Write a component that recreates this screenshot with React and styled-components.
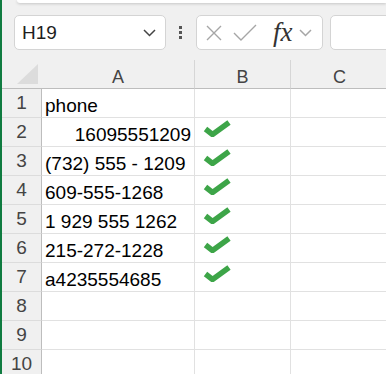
import { Fragment } from "react";
import styled, { createGlobalStyle } from "styled-components";

const GlobalStyle = createGlobalStyle`
  body {
    margin: 0;
    background: #f0f0f0;
    font-family: "Liberation Sans", Arial, sans-serif;
  }
`;

const Page = styled.div`
  display: flex;
  height: 100vh;
  overflow: hidden;
`;

const GreenEdge = styled.div`
  width: 2px;
  flex-shrink: 0;
  background: #107c41;
`;

const Main = styled.div`
  flex: 1;
  min-width: 0;
  display: flex;
  flex-direction: column;

  & > * {
    flex-shrink: 0;
  }
`;

const RibbonEdge = styled.div`
  height: 3px;
  margin-left: 15px;
  background: #fff;
  border-bottom-left-radius: 8px;
  box-shadow: 0 1px 3px rgba(0, 0, 0, 0.18);
`;

const FormulaBar = styled.div`
  display: flex;
  align-items: center;
  margin-top: 12px;
  padding-left: 12px;
  height: 35px;
`;

const Box = styled.div`
  box-sizing: border-box;
  height: 35px;
  background: #fff;
  border: 1px solid #d4d4d4;
  border-radius: 5px;
  display: flex;
  align-items: center;
  flex-shrink: 0;
`;

const NameBox = styled(Box)`
  width: 152px;
  padding: 0 9px 0 7px;
  justify-content: space-between;
  font-size: 19px;
  color: #1e1e1e;
`;

const Dots = styled.div`
  display: flex;
  flex-direction: column;
  gap: 2px;
  margin: 0 14px 0 13px;

  span {
    width: 3px;
    height: 3px;
    background: #555;
  }
`;

const ToolsBox = styled(Box)`
  width: 127px;
  padding: 0 4px 0 8px;
  gap: 10px;
`;

const Fx = styled.span`
  font-family: "Liberation Serif", "Times New Roman", serif;
  font-style: italic;
  font-size: 27px;
  color: #333;
  margin-left: 6px;
  margin-right: -4px;
  line-height: 1;
`;

const InputBox = styled(Box)`
  width: 90px;
  margin-left: 7px;
`;

const Sheet = styled.div`
  margin-top: 10px;
  display: grid;
  grid-template-columns: 40px 153px 96px 98px;
  grid-auto-rows: 29px;
`;

const Corner = styled.div`
  background: #f0f0f0;
  border-bottom: 1px solid #bdbdbd;
  display: flex;
  align-items: flex-end;
  padding: 0 0 4px 15px;
  box-sizing: border-box;
`;

const ColHeader = styled.div`
  box-sizing: border-box;
  background: #f0f0f0;
  border-bottom: 1px solid #bdbdbd;
  border-right: 1px solid #d6d6d6;
  display: flex;
  justify-content: center;
  align-items: center;
  padding-top: 6px;
  font-size: 18px;
  color: #444;
`;

const RowHeader = styled.div`
  box-sizing: border-box;
  background: #f0f0f0;
  border-right: 1px solid #bdbdbd;
  border-bottom: 1px solid #dcdcdc;
  display: flex;
  justify-content: center;
  align-items: center;
  font-size: 19px;
  color: #444;
`;

const Cell = styled.div`
  box-sizing: border-box;
  background: #fff;
  border-right: 1px solid #e1e1e1;
  border-bottom: 1px solid #e1e1e1;
  display: flex;
  align-items: ${(p) => (p.$check ? "flex-start" : "flex-end")};
  justify-content: ${(p) => (p.$right ? "flex-end" : "flex-start")};
  padding: ${(p) => (p.$check ? "2px 0 0 8px" : "0 3px")};
  font-size: 19px;
  line-height: 22px;
  color: #000;
  white-space: nowrap;
`;

const Chevron = ({ color = "#444" }) => (
  <svg width="13" height="8" viewBox="0 0 13 8">
    <polyline points="1,1 6.5,6.5 12,1" fill="none" stroke={color} strokeWidth="1.5" />
  </svg>
);

const CrossIcon = () => (
  <svg width="18" height="18" viewBox="0 0 18 18">
    <path d="M2 2 L16 16 M16 2 L2 16" stroke="#a6a6a6" strokeWidth="1.4" fill="none" />
  </svg>
);

const TickIcon = () => (
  <svg width="24" height="18" viewBox="0 0 24 18">
    <polyline points="1,9 8,16 23,1" stroke="#a6a6a6" strokeWidth="1.4" fill="none" />
  </svg>
);

const CornerMark = () => (
  <svg width="21" height="20" viewBox="0 0 21 20">
    <polygon points="21,0 21,20 0,20" fill="#dcdcdc" />
  </svg>
);

const GreenCheck = () => (
  <svg width="28" height="17" viewBox="0 0 28 17">
    <polyline
      points="2.5,9 9.5,14.5 26,2.5"
      fill="none"
      stroke="#3da548"
      strokeWidth="5.5"
    />
  </svg>
);

const rows = [
  { value: "phone" },
  { value: "16095551209", right: true, ok: true },
  { value: "(732) 555 - 1209", ok: true },
  { value: "609-555-1268", ok: true },
  { value: "1 929 555 1262", ok: true },
  { value: "215-272-1228", ok: true },
  { value: "a4235554685", ok: true },
  {},
  {},
  {},
];

export default function App() {
  return (
    <>
      <GlobalStyle />
      <Page>
        <GreenEdge />
        <Main>
          <RibbonEdge />
          <FormulaBar>
            <NameBox>
              <span>H19</span>
              <Chevron />
            </NameBox>
            <Dots>
              <span />
              <span />
              <span />
            </Dots>
            <ToolsBox>
              <CrossIcon />
              <TickIcon />
              <Fx>fx</Fx>
              <Chevron color="#a6a6a6" />
            </ToolsBox>
            <InputBox />
          </FormulaBar>
          <Sheet>
            <Corner>
              <CornerMark />
            </Corner>
            <ColHeader>A</ColHeader>
            <ColHeader>B</ColHeader>
            <ColHeader>C</ColHeader>
            {rows.map((r, i) => (
              <Fragment key={i}>
                <RowHeader>{i + 1}</RowHeader>
                <Cell $right={r.right}>{r.value}</Cell>
                <Cell $check>{r.ok && <GreenCheck />}</Cell>
                <Cell />
              </Fragment>
            ))}
          </Sheet>
        </Main>
      </Page>
    </>
  );
}
